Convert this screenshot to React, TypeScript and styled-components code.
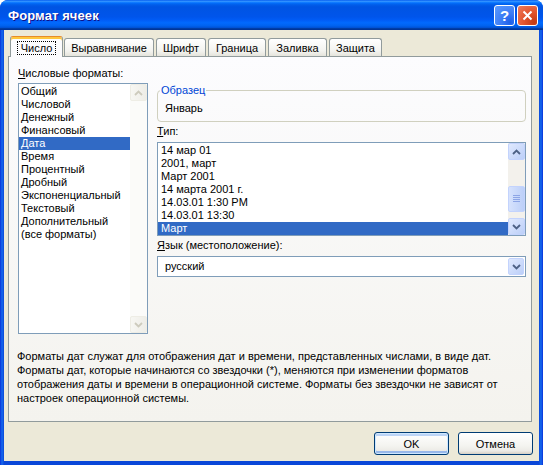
import React from "react";
import styled, { createGlobalStyle, css } from "styled-components";

const GlobalStyle = createGlobalStyle`
  html, body {
    margin: 0;
    padding: 0;
    background: #ffffff;
  }
  body {
    font-family: "Liberation Sans", Arial, sans-serif;
    font-size: 11px;
    color: #000;
  }
`;

const categories = [
  "Общий",
  "Числовой",
  "Денежный",
  "Финансовый",
  "Дата",
  "Время",
  "Процентный",
  "Дробный",
  "Экспоненциальный",
  "Текстовый",
  "Дополнительный",
  "(все форматы)",
];

const types = [
  "14 мар 01",
  "2001, март",
  "Март 2001",
  "14 марта 2001 г.",
  "14.03.01 1:30 PM",
  "14.03.01 13:30",
  "Март",
];

const tabs = [
  { label: "Число", width: 53 },
  { label: "Выравнивание", width: 90 },
  { label: "Шрифт", width: 50 },
  { label: "Граница", width: 58 },
  { label: "Заливка", width: 59 },
  { label: "Защита", width: 53 },
];

const description = [
  "Форматы дат служат для отображения дат и времени, представленных числами, в виде дат.",
  "Форматы дат, которые начинаются со звездочки (*), меняются при изменении форматов",
  "отображения даты и времени в операционной системе. Форматы без звездочки не зависят от",
  "настроек операционной системы.",
];

const Chevron = ({ up, color }: { up?: boolean; color: string }) => (
  <svg width="9" height="6" viewBox="0 0 9 6">
    <path
      d={up ? "M1 5 L4.5 1.5 L8 5" : "M1 1 L4.5 4.5 L8 1"}
      fill="none"
      stroke={color}
      strokeWidth="1.8"
    />
  </svg>
);

const App = () => {
  return (
    <>
      <GlobalStyle />
      <Window>
        <TitleBar>
          <Title>Формат ячеек</Title>
          <TitleButtons>
            <HelpButton>?</HelpButton>
            <CloseButton>
              <svg width="11" height="11" viewBox="0 0 11 11">
                <path d="M1.5 1.5 L9.5 9.5 M9.5 1.5 L1.5 9.5" stroke="#fff" strokeWidth="2" />
              </svg>
            </CloseButton>
          </TitleButtons>
        </TitleBar>
        <Body>
          <TabRow>
            {tabs.map((t, i) => (
              <Tab key={t.label} active={i === 0} width={t.width}>
                {i === 0 ? <Focus>{t.label}</Focus> : t.label}
              </Tab>
            ))}
          </TabRow>
          <Panel>
            <Columns>
              <LeftColumn>
                <Label>
                  <u>Ч</u>исловые форматы:
                </Label>
                <ListBox height={251}>
                  <Items>
                    {categories.map((c) => (
                      <Item key={c} selected={c === "Дата"}>
                        {c}
                      </Item>
                    ))}
                  </Items>
                  <ScrollBar disabled>
                    <ScrollButton disabled>
                      <Chevron up color="#cdcbbd" />
                    </ScrollButton>
                    <Track disabled />
                    <ScrollButton disabled>
                      <Chevron color="#cdcbbd" />
                    </ScrollButton>
                  </ScrollBar>
                </ListBox>
              </LeftColumn>
              <RightColumn>
                <Sample>
                  <Legend>Образец</Legend>
                  Январь
                </Sample>
                <Label spaced>
                  <u>Т</u>ип:
                </Label>
                <ListBox height={94}>
                  <Items>
                    {types.map((t) => (
                      <Item key={t} selected={t === "Март"} wide>
                        {t}
                      </Item>
                    ))}
                  </Items>
                  <ScrollBar>
                    <ScrollButton>
                      <Chevron up color="#4d6185" />
                    </ScrollButton>
                    <Track>
                      <Thumb>
                        <svg width="7" height="8" viewBox="0 0 7 8">
                          <path d="M0 0.5 H7 M0 2.5 H7 M0 4.5 H7 M0 6.5 H7" stroke="#8da5e6" strokeWidth="1" />
                        </svg>
                      </Thumb>
                    </Track>
                    <ScrollButton>
                      <Chevron color="#4d6185" />
                    </ScrollButton>
                  </ScrollBar>
                </ListBox>
                <Label spaced>
                  <u>Я</u>зык (местоположение):
                </Label>
                <Combo>
                  <ComboText>русский</ComboText>
                  <ComboButton>
                    <Chevron color="#4d6185" />
                  </ComboButton>
                </Combo>
              </RightColumn>
            </Columns>
            <Description>
              {description.map((line) => (
                <DescLine key={line}>{line}</DescLine>
              ))}
            </Description>
          </Panel>
          <ButtonRow>
            <PushButton isDefault>OK</PushButton>
            <PushButton>Отмена</PushButton>
          </ButtonRow>
        </Body>
      </Window>
    </>
  );
};

const Window = styled.div`
  width: 543px;
  height: 465px;
  display: flex;
  flex-direction: column;
  background: linear-gradient(to right, #0831d9, #166aee 2px, #0a47d8 4px, #0a47d8 539px, #166aee 541px, #0831d9);
  border-radius: 8px 8px 0 0;
  overflow: hidden;
`;

const TitleBar = styled.div`
  height: 30px;
  flex: none;
  display: flex;
  align-items: center;
  justify-content: space-between;
  padding: 0 5px 0 8px;
  box-sizing: border-box;
  background: linear-gradient(
    to bottom,
    #0058ee 0%,
    #3593ff 4%,
    #288eff 6%,
    #127dff 8%,
    #036ffc 10%,
    #0262ee 14%,
    #0057e5 20%,
    #0054e3 24%,
    #0055eb 56%,
    #005bf5 66%,
    #026afe 76%,
    #0062ef 86%,
    #0052d6 92%,
    #0040ab 94%,
    #003092 100%
  );
`;

const Title = styled.span`
  color: #fff;
  font-family: "Liberation Sans", Arial, sans-serif;
  font-weight: bold;
  font-size: 13px;
  text-shadow: 1px 1px #0f1089;
  letter-spacing: 0.1px;
`;

const TitleButtons = styled.div`
  display: flex;
  gap: 2px;
  margin-top: 1px;
`;

const titleButton = css`
  width: 21px;
  height: 21px;
  box-sizing: border-box;
  border: 1px solid #fff;
  border-radius: 3px;
  display: flex;
  align-items: center;
  justify-content: center;
`;

const HelpButton = styled.div`
  ${titleButton};
  background: radial-gradient(circle at 80% 85%, #1d5fe8 0%, #3c7cf5 40%, #5c9bff 100%);
  color: #fff;
  font-weight: bold;
  font-size: 15px;
  font-family: "Liberation Sans", Arial, sans-serif;
`;

const CloseButton = styled.div`
  ${titleButton};
  background: radial-gradient(circle at 85% 85%, #c23a14 0%, #e2542c 45%, #ee7d5e 100%);
`;

const Body = styled.div`
  flex: 1;
  margin: 0 4px 4px 4px;
  background: #ece9d8;
  padding: 6px 7px 0 4px;
  display: flex;
  flex-direction: column;
`;

const TabRow = styled.div`
  display: flex;
  align-items: flex-end;
  gap: 2px;
  height: 20px;
  padding-left: 2px;
  position: relative;
  z-index: 1;
`;

const Tab = styled.div<{ active?: boolean; width: number }>`
  width: ${({ width }) => width}px;
  box-sizing: border-box;
  display: flex;
  align-items: center;
  justify-content: center;
  border: 1px solid #919b9c;
  border-bottom: none;
  border-radius: 3px 3px 0 0;
  ${({ active }) =>
    active
      ? css`
          height: 21px;
          margin-bottom: -1px;
          margin-right: -1px;
          border-top: 1px solid #e68b2c;
          box-shadow: inset 0 2px #ffc73c;
          background: #fcfcfe;
          padding-top: 1px;
        `
      : css`
          height: 18px;
          background: linear-gradient(to bottom, #ffffff, #f3f3ef 70%, #e5e4dc);
        `}
`;

const Focus = styled.span`
  border: 1px dotted #000;
  padding: 0 3px;
  line-height: 12px;
`;

const Panel = styled.div`
  height: 366px;
  box-sizing: border-box;
  border: 1px solid #919b9c;
  background: linear-gradient(to bottom, #fcfcfe, #f4f3ee);
  padding: 10px 5px 0 9px;
  display: flex;
  flex-direction: column;
`;

const Columns = styled.div`
  display: grid;
  grid-template-columns: 130px 369px;
  column-gap: 9px;
`;

const LeftColumn = styled.div`
  display: flex;
  flex-direction: column;
`;

const RightColumn = styled.div`
  display: flex;
  flex-direction: column;
  padding-top: 17px;
`;

const Label = styled.div<{ spaced?: boolean }>`
  line-height: 13px;
  height: 13px;
  margin-bottom: ${({ spaced }) => (spaced ? 4 : 3)}px;
  margin-top: ${({ spaced }) => (spaced ? 3 : 0)}px;
  white-space: nowrap;
`;

const ListBox = styled.div<{ height: number }>`
  height: ${({ height }) => height}px;
  box-sizing: border-box;
  border: 1px solid #7f9db9;
  background: #fff;
  display: flex;
`;

const Items = styled.div`
  flex: 1;
  padding-top: 1px;
  overflow: hidden;
`;

const Item = styled.div<{ selected?: boolean; wide?: boolean }>`
  height: 13px;
  line-height: 13px;
  padding-left: ${({ wide }) => (wide ? 3 : 2)}px;
  white-space: nowrap;
  ${({ selected }) =>
    selected &&
    css`
      background: #316ac5;
      color: #fff;
    `}
`;

const ScrollBar = styled.div<{ disabled?: boolean }>`
  width: 17px;
  display: flex;
  flex-direction: column;
  background: ${({ disabled }) => (disabled ? "#fbfbf9" : "#f3f1ec")};
`;

const ScrollButton = styled.div<{ disabled?: boolean }>`
  height: 17px;
  flex: none;
  box-sizing: border-box;
  border-radius: 2px;
  display: flex;
  align-items: center;
  justify-content: center;
  ${({ disabled }) =>
    disabled
      ? css`
          border: 1px solid #eeede5;
          background: linear-gradient(to right, #f7f7f3, #eeede7);
        `
      : css`
          border: 1px solid #c3d3fd;
          background: linear-gradient(135deg, #e0e9fe, #bccff8);
        `}
`;

const Track = styled.div<{ disabled?: boolean }>`
  flex: 1;
  display: flex;
  flex-direction: column;
`;

const Thumb = styled.div`
  margin-top: 26px;
  height: 26px;
  box-sizing: border-box;
  border: 1px solid #c3d3fd;
  border-radius: 2px;
  background: linear-gradient(to right, #d6e2fd, #bccff8);
  display: flex;
  align-items: center;
  justify-content: center;
`;

const Sample = styled.fieldset`
  margin: 0;
  padding: 5px 7px 6px 7px;
  border: 1px solid #d0d0bf;
  border-radius: 4px;
  line-height: 13px;
  min-width: 0;
`;

const Legend = styled.legend`
  color: #0046d5;
  padding: 0 1px;
  margin-left: -5px;
  line-height: 13px;
`;

const Combo = styled.div`
  height: 21px;
  box-sizing: border-box;
  border: 1px solid #7f9db9;
  background: #fff;
  display: flex;
  align-items: stretch;
  padding: 1px;
`;

const ComboText = styled.div`
  flex: 1;
  padding-left: 6px;
  line-height: 17px;
`;

const ComboButton = styled.div`
  width: 16px;
  box-sizing: border-box;
  border: 1px solid #c3d3fd;
  border-radius: 2px;
  background: linear-gradient(135deg, #e0e9fe, #bccff8);
  display: flex;
  align-items: center;
  justify-content: center;
`;

const Description = styled.div`
  margin-top: 15px;
  margin-left: -1px;
`;

const DescLine = styled.div`
  line-height: 14px;
  white-space: nowrap;
`;

const ButtonRow = styled.div`
  display: flex;
  justify-content: flex-end;
  gap: 9px;
  margin-top: 10px;
  padding-right: -1px;
  margin-right: -1px;
`;

const PushButton = styled.div<{ isDefault?: boolean }>`
  width: 75px;
  height: 23px;
  box-sizing: border-box;
  border: 1px solid #003c74;
  border-radius: 3px;
  background: linear-gradient(to bottom, #ffffff, #f4f4f0 60%, #ecebe6 85%, #d6d0c5);
  display: flex;
  align-items: center;
  justify-content: center;
  ${({ isDefault }) =>
    isDefault &&
    css`
      box-shadow: inset 0 0 0 1px #cee7ff, inset 0 -2px 0 1px #98b8ea, inset 0 2px 0 1px #bcd4f6;
    `}
`;

export default App;
